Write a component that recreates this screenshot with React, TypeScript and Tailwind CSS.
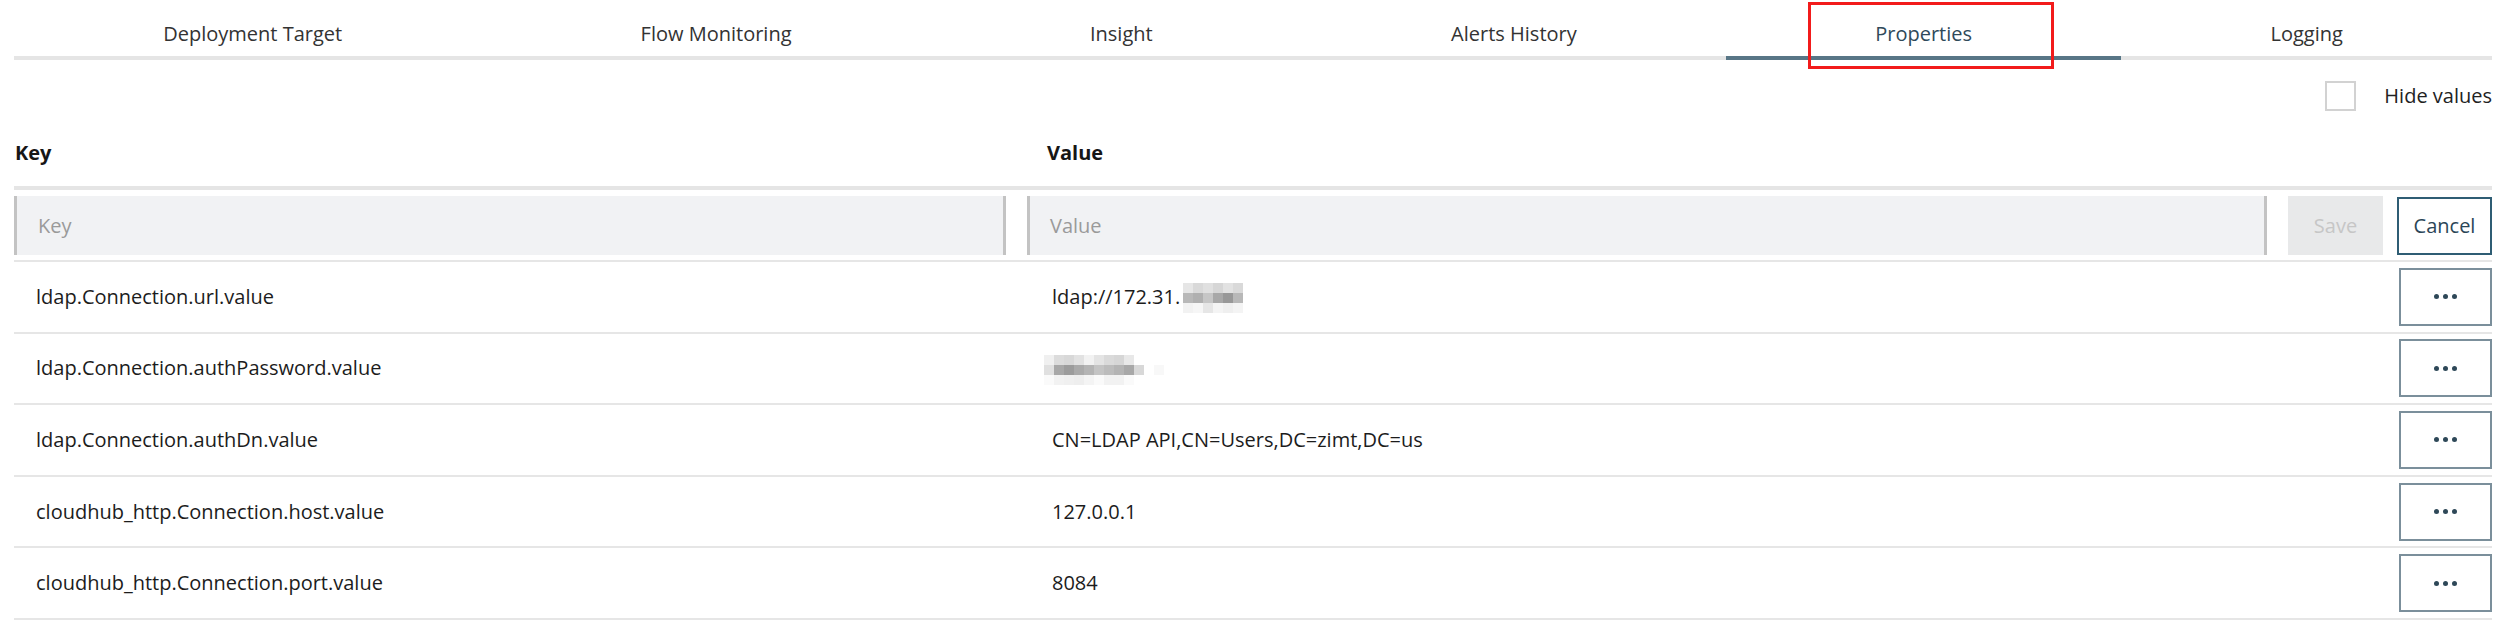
import React from "react";

const tabs = ["Deployment Target", "Flow Monitoring", "Insight", "Alerts History", "Properties", "Logging"];

// pixelated (redacted) bits of the screenshot
const urlBlur = [
  ["#e6e6e6", "#d9d9d9", "#e0e0e0", "#d6d6d6", "#e2e2e2", "#d9d9d9"],
  ["#b8b8b8", "#b0b0b0", "#c6c6c6", "#a8a8a8", "#989898", "#b8b8b8"],
  ["#f2f2f2", "#f6f6f6", "#e6e6e6", "#f4f4f4", "#efefef", "#f4f4f4"],
];
const pwBlur = [
  ["#f0f0f0", "#dcdcdc", "#d8d8d8", "#e2e2e2", "#f2f2f2", "#e4e4e4", "#dadada", "#d6d6d6", "#e8e8e8", "#ffffff", "#ffffff", "#ffffff"],
  ["#e0e0e0", "#a8a8a8", "#9c9c9c", "#aaaaaa", "#b4b4b4", "#c4c4c4", "#bcbcbc", "#b4b4b4", "#a8a8a8", "#d8d8d8", "#ffffff", "#f8f8f8"],
  ["#fafafa", "#f2f2f2", "#f0f0f0", "#eeeeee", "#f4f4f4", "#fafafa", "#f2f2f2", "#f2f2f2", "#fafafa", "#ffffff", "#ffffff", "#ffffff"],
];

function Mosaic({ cells, className }: { cells: string[][]; className?: string }) {
  const w = cells[0].length * 10;
  const h = cells.length * 10;
  return (
    <svg width={w} height={h} viewBox={`0 0 ${w} ${h}`} className={className}>
      {cells.map((row, r) =>
        row.map((c, i) => <rect key={`${r}-${i}`} x={i * 10} y={r * 10} width="10" height="10" fill={c} />)
      )}
    </svg>
  );
}

const rows: { k: string; v: React.ReactNode }[] = [
  {
    k: "ldap.Connection.url.value",
    v: (
      <span className="flex items-center">
        ldap://172.31.
        <Mosaic cells={urlBlur} className="ml-[3px] mt-[2px]" />
      </span>
    ),
  },
  { k: "ldap.Connection.authPassword.value", v: <Mosaic cells={pwBlur} className="-ml-[8px] mt-[3px]" /> },
  { k: "ldap.Connection.authDn.value", v: "CN=LDAP API,CN=Users,DC=zimt,DC=us" },
  { k: "cloudhub_http.Connection.host.value", v: "127.0.0.1" },
  { k: "cloudhub_http.Connection.port.value", v: "8084" },
];

export default function App() {
  return (
    <div className="h-[630px] w-[2500px] overflow-hidden bg-white pl-[14px] pr-[8px] font-['Open_Sans',sans-serif] text-[20px] text-[#1c1c1c]">
      {/* Tabs */}
      <div className="flex">
        {tabs.map((t) => {
          const active = t === "Properties";
          return (
            <div
              key={t}
              className={
                active
                  ? "relative flex h-[60px] flex-auto justify-center border-b-4 border-[#587686] pt-[20px] text-[#2f4a5a]"
                  : "flex h-[60px] flex-auto justify-center border-b-4 border-[#e5e5e5] pt-[20px] text-[#333333]"
              }
            >
              <span className="leading-[28px] whitespace-nowrap">{t}</span>
              {active && (
                <div className="absolute left-[82px] top-[2px] h-[67px] w-[246px] border-[3px] border-[#f21b1b]" />
              )}
            </div>
          );
        })}
      </div>

      {/* Hide values */}
      <div className="mt-[21px] flex h-[30px] items-center justify-end">
        <div className="h-[30px] w-[31px] border-2 border-[#d2d2d2] bg-white" />
        <span className="ml-[28px] leading-[28px] text-[#222222]">Hide values</span>
      </div>

      {/* Header */}
      <div className="grid h-[79px] grid-cols-[1013px_1261px_1fr] border-b-4 border-[#e5e5e5] pt-[28px] font-bold leading-[28px] text-[#161616]">
        <div className="pl-[1px]">Key</div>
        <div className="pl-[20px]">Value</div>
        <div />
      </div>

      {/* New property row */}
      <div className="grid grid-cols-[1013px_1261px_1fr] border-b-2 border-[#e6e6e6] pt-[6px] pb-[5px]">
        <div className="flex h-[59px] w-[992px] items-center border-x-[3px] border-[#c3c3c3] bg-[#f1f2f4] pl-[21px] text-[#9a9a9a]">
          Key
        </div>
        <div className="flex h-[59px] w-[1240px] items-center border-x-[3px] border-[#c3c3c3] bg-[#f1f2f4] pl-[20px] text-[#9a9a9a]">
          Value
        </div>
        <div className="flex items-center justify-end gap-[14px]">
          <div className="flex h-[59px] w-[95px] items-center justify-center bg-[#e8e9ea] text-[#c6c6c6]">Save</div>
          <div className="flex h-[58px] w-[95px] items-center justify-center border-2 border-[#2f5d74] text-[#2b4657]">
            Cancel
          </div>
        </div>
      </div>

      {/* Properties */}
      {rows.map((r) => (
        <div
          key={r.k}
          className="grid h-[71.6px] grid-cols-[1013px_1261px_1fr] items-center border-b-2 border-[#e6e6e6]"
        >
          <div className="pl-[22px] whitespace-nowrap">{r.k}</div>
          <div className="flex items-center pl-[25px] whitespace-nowrap">{r.v}</div>
          <div className="flex justify-end">
            <div className="flex h-[58px] w-[93px] items-center justify-center gap-[4px] border-2 border-[#7b8f9b]">
              <span className="h-[5px] w-[5px] rounded-full bg-[#2e4858]" />
              <span className="h-[5px] w-[5px] rounded-full bg-[#2e4858]" />
              <span className="h-[5px] w-[5px] rounded-full bg-[#2e4858]" />
            </div>
          </div>
        </div>
      ))}
    </div>
  );
}
